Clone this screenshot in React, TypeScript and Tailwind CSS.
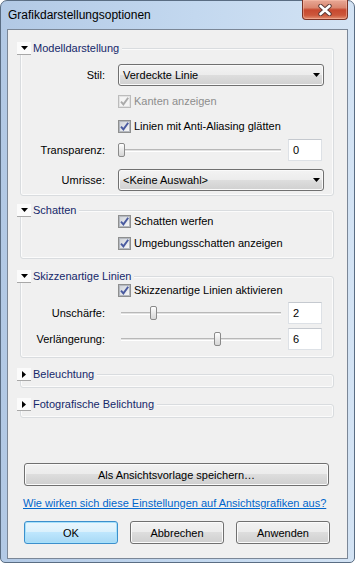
import React from "react";

const FONT = "font-['Liberation_Sans',Arial,sans-serif]";

function TriDown() {
  return (
    <svg width="7" height="4" viewBox="0 0 7 4">
      <path d="M0 0H7L3.5 4Z" fill="#000" />
    </svg>
  );
}
function TriRight() {
  return (
    <svg width="4" height="7" viewBox="0 0 4 7">
      <path d="M0 0V7L4 3.5Z" fill="#000" />
    </svg>
  );
}

function Check({ checked, disabled }: { checked?: boolean; disabled?: boolean }) {
  return (
    <span
      className={`w-[13px] h-[13px] border ${
        disabled ? "border-[#bcbcbc]" : "border-[#8e8f8f]"
      } bg-white flex items-center justify-center shrink-0`}
    >
      <span
        className={`w-[11px] h-[11px] border flex items-center justify-center ${
          disabled
            ? "border-[#e3e3e3] bg-[#f4f4f4]"
            : "border-[#b4b8bf] bg-linear-to-br from-[#cfd3d9] to-[#f7f7f7]"
        }`}
      >
        {checked && (
          <svg width="9" height="9" viewBox="0 0 9 9">
            <path
              d="M1 4.6L3.4 7.4L8.2 0.8"
              stroke={disabled ? "#ababab" : "#4a5ba0"}
              strokeWidth="1.9"
              fill="none"
            />
          </svg>
        )}
      </span>
    </span>
  );
}

function CheckRow({
  text,
  checked,
  disabled,
  className = "",
}: {
  text: string;
  checked?: boolean;
  disabled?: boolean;
  className?: string;
}) {
  return (
    <div className={`flex items-center h-[14px] ml-[97px] ${className}`}>
      <Check checked={checked} disabled={disabled} />
      <span className={`ml-[3px] whitespace-nowrap ${disabled ? "text-[#8d8d8d]" : ""}`}>{text}</span>
    </div>
  );
}

function Select({ text }: { text: string }) {
  return (
    <div className="w-[206px] h-[22px] border border-[#707070] rounded-[3px] bg-[linear-gradient(to_bottom,#f3f3f3_0%,#ececec_50%,#dedede_50%,#d0d0d0_100%)] shadow-[inset_0_0_0_1px_#fafafa] flex items-center justify-between pl-[4px] pr-[3px]">
      <span className="whitespace-nowrap">{text}</span>
      <TriDown />
    </div>
  );
}

function Num({ v }: { v: string }) {
  return (
    <div className="w-[34px] h-[22px] bg-white border border-[#dde1e6] border-t-[#c5c9cf] flex items-center pl-[4px] ml-[4px]">
      {v}
    </div>
  );
}

function Slider({ frac }: { frac: number }) {
  const left = 3 + frac * 160 - 3.5;
  return (
    <div className="relative w-[166px] h-[22px]">
      <div className="absolute left-[3px] right-[3px] top-[10px] h-[3px] border-t border-t-[#b8b8b8] border-b border-b-white bg-[#e2e2e2]" />
      <div
        className="absolute top-[4px] w-[7px] h-[14px] rounded-[2px] border border-[#8a8a8a] bg-[linear-gradient(to_bottom,#ffffff,#e9e9e9_50%,#d6d6d6)]"
        style={{ left: `${left}px` }}
      />
    </div>
  );
}

function Row({
  label,
  children,
  className = "",
}: {
  label: string;
  children: React.ReactNode;
  className?: string;
}) {
  return (
    <div className={`flex items-center h-[22px] ${className}`}>
      <div className="w-[84px] text-right whitespace-nowrap">{label}</div>
      <div className="ml-[13px] flex items-center">{children}</div>
    </div>
  );
}

function Group({
  title,
  open,
  boxClass,
  className = "",
  children,
}: {
  title: string;
  open: boolean;
  boxClass: string;
  className?: string;
  children?: React.ReactNode;
}) {
  return (
    <div className={`w-[314px] ml-[12px] flex flex-col ${className}`}>
      <div className="relative z-10 flex items-center h-[13px] -ml-[3px] self-start">
        <span className="w-[14px] h-[13px] bg-[#fbfbfb] border-b border-[#a8a8a8] flex items-center justify-center">
          {open ? <TriDown /> : <TriRight />}
        </span>
        <span className="pl-[2px] pr-[3px] bg-[#f0f0f0] leading-[13px] text-[#15286a] whitespace-nowrap">
          {title}
        </span>
      </div>
      <div className={`-mt-[7px] border border-[#d9dcdf] rounded-[3px] shadow-[inset_0_0_0_1px_#fbfbfb] flex flex-col ${boxClass}`}>
        {children}
      </div>
    </div>
  );
}

function Btn({
  children,
  def,
  className = "",
}: {
  children: React.ReactNode;
  def?: boolean;
  className?: string;
}) {
  return (
    <div
      className={`h-[23px] rounded-[3px] border flex items-center justify-center whitespace-nowrap ${
        def
          ? "border-[#3c8fcc] bg-[linear-gradient(to_bottom,#eaf6fd_0%,#d9f0fc_50%,#bee6fd_50%,#a7d9f5_100%)] shadow-[inset_0_0_0_1px_#a6e1fb]"
          : "border-[#707070] bg-[linear-gradient(to_bottom,#f2f2f2_0%,#ebebeb_50%,#dddddd_50%,#cfcfcf_100%)] shadow-[inset_0_0_0_1px_#fbfbfb]"
      } ${className}`}
    >
      {children}
    </div>
  );
}

function CloseBtn() {
  return (
    <div className="ml-auto mr-[6px] -mt-[1px] w-[46px] h-[20px] rounded-b-[4px] border border-t-0 border-[#7a3326] bg-[linear-gradient(to_bottom,#e8a896_0%,#da8770_40%,#c7492f_52%,#cc573b_80%,#e39072_100%)] shadow-[inset_0_0_0_1px_rgba(255,200,180,0.45)] flex items-center justify-center">
      <svg width="14" height="12" viewBox="0 0 14 12">
        <path d="M2.5 2L11.5 10M11.5 2L2.5 10" stroke="#5b3a36" strokeWidth="4.4" strokeLinecap="round" />
        <path d="M2.5 2L11.5 10M11.5 2L2.5 10" stroke="#ffffff" strokeWidth="2.6" strokeLinecap="round" />
      </svg>
    </div>
  );
}

export default function App() {
  return (
    <div className={`${FONT} text-[11px] leading-[14px] text-black w-[355px] h-[563px]`}>
      <div className="w-[355px] h-[563px] rounded-t-[7px] rounded-b-[5px] border border-[#5a6d83] bg-[linear-gradient(to_right,#b2c9e5,#c3d8ef_55%,#d3e3f4)] flex flex-col">
        <div className="h-[28px] flex items-start shrink-0">
          <div className="pl-[7px] h-[28px] flex items-center whitespace-nowrap text-[12px]">Grafikdarstellungsoptionen</div>
          <CloseBtn />
        </div>
        <div className="mx-[6px] h-[530px] shrink-0 border border-[#7b8797] bg-[#f0f0f0] flex flex-col">
          <Group title="Modelldarstellung" open boxClass="h-[148px]" className="mt-[12px]">
            <Row label="Stil:" className="mt-[15px]">
              <Select text="Verdeckte Linie" />
            </Row>
            <CheckRow text="Kanten anzeigen" checked disabled className="mt-[8px]" />
            <CheckRow text="Linien mit Anti-Aliasing glätten" checked className="mt-[11px]" />
            <Row label="Transparenz:" className="mt-[6px]">
              <Slider frac={0} />
              <Num v="0" />
            </Row>
            <Row label="Umrisse:" className="mt-[8px]">
              <Select text="<Keine Auswahl>" />
            </Row>
          </Group>

          <Group title="Schatten" open boxClass="h-[49px]" className="mt-[8px]">
            <CheckRow text="Schatten werfen" checked className="mt-[3px]" />
            <CheckRow text="Umgebungsschatten anzeigen" checked className="mt-[8px]" />
          </Group>

          <Group title="Skizzenartige Linien" open boxClass="h-[82px]" className="mt-[11px]">
            <CheckRow text="Skizzenartige Linien aktivieren" checked className="mt-[6px]" />
            <Row label="Unschärfe:" className="mt-[5px]">
              <Slider frac={0.2} />
              <Num v="2" />
            </Row>
            <Row label="Verlängerung:" className="mt-[4px]">
              <Slider frac={0.6} />
              <Num v="6" />
            </Row>
          </Group>

          <Group title="Beleuchtung" open={false} boxClass="h-[14px]" className="mt-[10px]" />
          <Group title="Fotografische Belichtung" open={false} boxClass="h-[14px]" className="mt-[10px]" />

          <Btn className="mt-[45px] ml-[16px] w-[305px] h-[22px]">Als Ansichtsvorlage speichern…</Btn>

          <div className="mt-[10px] ml-[15px] h-[14px] text-[#0066cc] underline whitespace-nowrap">
            Wie wirken sich diese Einstellungen auf Ansichtsgrafiken aus?
          </div>

          <div className="mt-[11px] ml-[16px] flex gap-[12px]">
            <Btn def className="w-[94px]">OK</Btn>
            <Btn className="w-[94px]">Abbrechen</Btn>
            <Btn className="w-[94px]">Anwenden</Btn>
          </div>
        </div>
      </div>
    </div>
  );
}
